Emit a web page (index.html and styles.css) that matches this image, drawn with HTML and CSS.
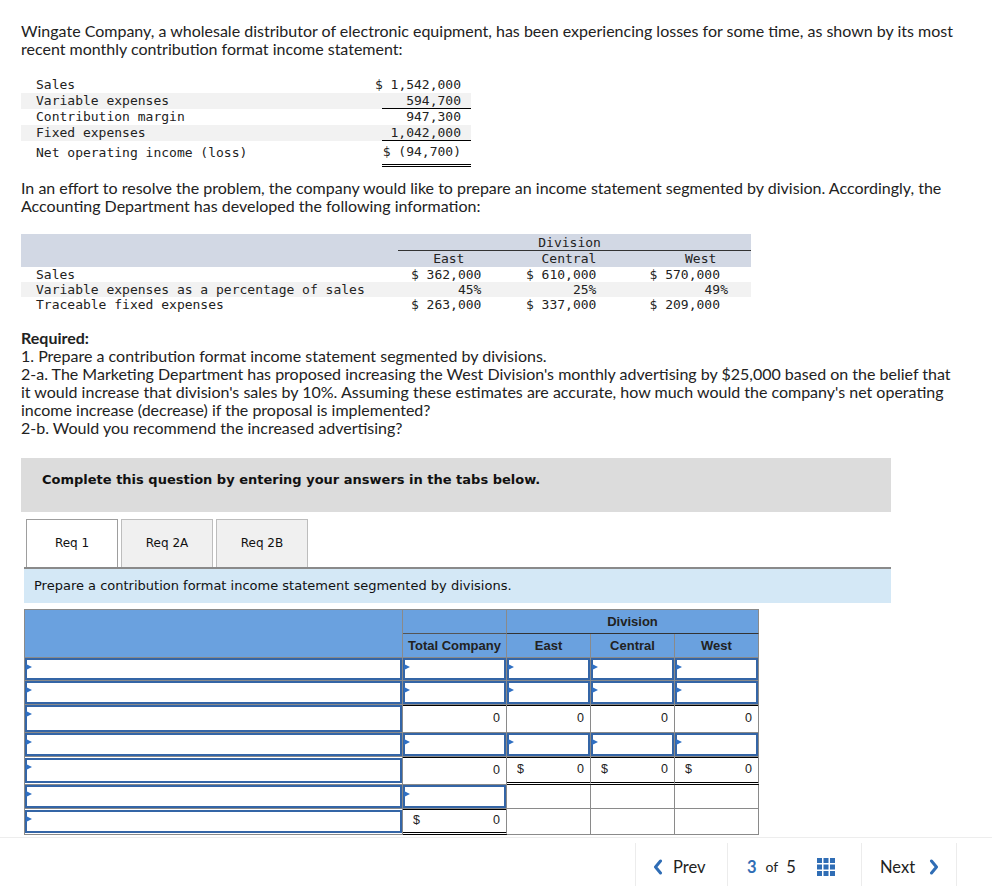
FILE: index.html
```html
<!DOCTYPE html>
<html lang="en">
<head>
<meta charset="utf-8">
<title>Wingate Company</title>
<link rel="stylesheet" href="styles.css">
</head>
<body>
<div class="page">
  <p class="txt intro">Wingate Company, a wholesale distributor of electronic equipment, has been experiencing losses for some time, as shown by its most recent monthly contribution format income statement:</p>

  <table class="stmt">
    <tr><td class="lbl">Sales</td><td class="num"><div class="v">$ 1,542,000</div></td></tr>
    <tr class="alt"><td class="lbl">Variable expenses</td><td class="num ul"><div class="v">594,700</div></td></tr>
    <tr><td class="lbl">Contribution margin</td><td class="num"><div class="v">947,300</div></td></tr>
    <tr class="alt"><td class="lbl">Fixed expenses</td><td class="num ul"><div class="v">1,042,000</div></td></tr>
    <tr class="net"><td class="lbl">Net operating income (loss)</td><td class="num dbl"><div class="v">$ (94,700)</div></td></tr>
  </table>

  <p class="txt para2">In an effort to resolve the problem, the company would like to prepare an income statement segmented by division. Accordingly, the Accounting Department has developed the following information:</p>

  <table class="divt">
    <tr class="hd">
      <td class="lbl" rowspan="2"></td>
      <td class="divhead" colspan="3">Division</td>
    </tr>
    <tr class="hd hd2">
      <td class="c-e">East</td><td class="c-c">Central</td><td class="c-w">West</td>
    </tr>
    <tr><td class="lbl">Sales</td><td class="v-e">$ 362,000</td><td class="v-c">$ 610,000</td><td class="v-w">$ 570,000</td></tr>
    <tr class="alt"><td class="lbl">Variable expenses as a percentage of sales</td><td class="v-e">45%</td><td class="v-c">25%</td><td class="p-w">49%</td></tr>
    <tr><td class="lbl">Traceable fixed expenses</td><td class="v-e">$ 263,000</td><td class="v-c">$ 337,000</td><td class="v-w">$ 209,000</td></tr>
  </table>

  <div class="txt req">
    <div class="req-title">Required:</div>
    <div>1. Prepare a contribution format income statement segmented by divisions.</div>
    <div>2-a. The Marketing Department has proposed increasing the West Division's monthly advertising by $25,000 based on the belief that it would increase that division's sales by 10%. Assuming these estimates are accurate, how much would the company's net operating income increase (decrease) if the proposal is implemented?</div>
    <div>2-b. Would you recommend the increased advertising?</div>
  </div>

  <div class="banner">Complete this question by entering your answers in the tabs below.</div>

  <div class="tabs">
    <div class="tab active">Req 1</div>
    <div class="tab">Req 2A</div>
    <div class="tab">Req 2B</div>
  </div>
  <div class="instr">Prepare a contribution format income statement segmented by divisions.</div>

  <table class="ans">
    <tr class="h1">
      <td class="c-lbl" rowspan="2"></td>
      <td class="c-tot"></td>
      <td class="c-div" colspan="3">Division</td>
    </tr>
    <tr class="h2">
      <td class="c-tot">Total Company</td>
      <td>East</td><td>Central</td><td>West</td>
    </tr>
    <tr class="r23">
      <td><div class="inp"></div></td>
      <td><div class="inp"></div></td>
      <td><div class="inp"></div></td>
      <td><div class="inp"></div></td>
      <td><div class="inp"></div></td>
    </tr>
    <tr class="r24">
      <td><div class="inp"></div></td>
      <td><div class="inp"></div></td>
      <td><div class="inp"></div></td>
      <td><div class="inp"></div></td>
      <td><div class="inp"></div></td>
    </tr>
    <tr class="r28">
      <td><div class="inp tall"></div></td>
      <td class="n sum">0</td>
      <td class="n sum">0</td>
      <td class="n sum">0</td>
      <td class="n sum">0</td>
    </tr>
    <tr class="r24">
      <td><div class="inp"></div></td>
      <td><div class="inp"></div></td>
      <td><div class="inp"></div></td>
      <td><div class="inp"></div></td>
      <td><div class="inp"></div></td>
    </tr>
    <tr class="r26">
      <td><div class="inp"></div></td>
      <td class="n sum">0</td>
      <td class="n sum dbl"><span class="cur">$</span>0</td>
      <td class="n sum dbl"><span class="cur">$</span>0</td>
      <td class="n sum dbl"><span class="cur">$</span>0</td>
    </tr>
    <tr class="r24">
      <td><div class="inp"></div></td>
      <td><div class="inp"></div></td>
      <td></td><td></td><td></td>
    </tr>
    <tr class="r24">
      <td><div class="inp"></div></td>
      <td class="n sum dbl"><span class="cur">$</span>0</td>
      <td></td><td></td><td></td>
    </tr>
  </table>
</div>

<div class="footer">
  <nav class="pager">
    <div class="pg prev">
      <svg class="chev" width="10" height="16" viewBox="0 0 10 16"><polyline points="7.5,2 2.5,8 7.5,14" fill="none" stroke="#2f6db5" stroke-width="3" stroke-linecap="round" stroke-linejoin="round"/></svg>
      <span>Prev</span>
    </div>
    <div class="pg count">
      <span class="cur-p">3</span><span class="of">of</span><span>5</span>
      <svg class="grid" width="18" height="18" viewBox="0 0 18 18" fill="#2f6db5">
        <rect x="0" y="0" width="5" height="5"/><rect x="6.5" y="0" width="5" height="5"/><rect x="13" y="0" width="5" height="5"/>
        <rect x="0" y="6.5" width="5" height="5"/><rect x="6.5" y="6.5" width="5" height="5"/><rect x="13" y="6.5" width="5" height="5"/>
        <rect x="0" y="13" width="5" height="5"/><rect x="6.5" y="13" width="5" height="5"/><rect x="13" y="13" width="5" height="5"/>
      </svg>
    </div>
    <div class="pg next">
      <span>Next</span>
      <svg class="chev" width="10" height="16" viewBox="0 0 10 16"><polyline points="2.5,2 7.5,8 2.5,14" fill="none" stroke="#2f6db5" stroke-width="3" stroke-linecap="round" stroke-linejoin="round"/></svg>
    </div>
  </nav>
</div>
</body>
</html>
```

FILE: styles.css
```css
html, body {
  margin: 0;
  padding: 0;
  background: #fff;
  color: #222;
}

.page {
  padding: 0 0 0 21px;
  width: 940px;
}

.txt {
  font-family: Lato, "Liberation Sans", sans-serif;
  font-size: 16px;
  line-height: 18px;
  color: #222;
}

.intro {
  margin: 22px 0 0;
}

.para2 {
  margin: 12px 0 0;
}

/* statement table */
.stmt, .divt {
  border-collapse: collapse;
  font-family: "DejaVu Sans Mono", monospace;
  font-size: 13px;
  color: #222;
}

.stmt {
  margin-top: 19px;
  width: 450px;
}

.stmt td {
  padding: 0;
  height: 15.6px;
  line-height: 15.6px;
  white-space: nowrap;
}

.stmt .lbl {
  padding-left: 15px;
}

.stmt .num {
  width: 79px;
  padding-right: 10px;
}

.stmt .v {
  width: 79px;
  display: flex;
  justify-content: flex-end;
}

.stmt .alt td {
  background: #f2f2f2;
}

.stmt .ul {
  border-bottom: 1px solid #000;
}

.stmt .net td {
  padding-top: 3px;
  padding-bottom: 4px;
}

.stmt .dbl {
  border-bottom: 3px double #000;
}

/* division table */
.divt {
  margin-top: 19px;
  width: 730px;
}

.divt td {
  padding: 0;
  line-height: 15px;
  height: 15px;
  white-space: nowrap;
}

.divt .lbl {
  width: 367px;
  padding-left: 15px;
}

.divt .hd td {
  background: #d2d8e4;
}

.divt .divhead {
  text-align: center;
  padding-top: 1px;
  border-bottom: 1px solid #333;
  padding-right: 10px;
}

.divt .hd2 td {
  text-align: center;
  padding-bottom: 1px;
}

.divt .c-e { width: 87px; padding-left: 8px !important; }
.divt .c-c { width: 160px; }
.divt .c-w { width: 101px; padding-left: 4px !important; }

.divt .v-e, .divt .v-c, .divt .v-w, .divt .p-w {
  text-align: right;
}

.divt .v-e { padding-right: 10px; }
.divt .v-c { padding-right: 50px; }
.divt .v-w { padding-right: 31px; }
.divt .p-w { padding-right: 23px; }

.divt .alt td {
  background: #f2f2f2;
}

/* required */
.req {
  margin-top: 17px;
}

.req-title {
  font-weight: 700;
}

/* banner */
.banner {
  margin-top: 21px;
  width: 870px;
  height: 54px;
  box-sizing: border-box;
  background: #dcdcdc;
  padding: 14px 0 0 21px;
  font-family: "DejaVu Sans", Verdana, sans-serif;
  font-weight: 700;
  font-size: 13px;
  color: #111;
}

/* tabs */
.tabs {
  display: flex;
  gap: 3px;
  margin: 7px 0 0 5px;
  height: 48px;
}

.tab {
  width: 92px;
  box-sizing: border-box;
  border: 1px solid #bdbdbd;
  border-bottom: none;
  background: #f0f0f0;
  display: flex;
  align-items: center;
  justify-content: center;
  font-family: "DejaVu Sans", Verdana, sans-serif;
  font-size: 12px;
  color: #111;
}

.tab.active {
  background: #fff;
  border-color: #9e9e9e;
}

.instr {
  margin-left: 3px;
  width: 867px;
  box-sizing: border-box;
  border-top: 2px solid #8a8a8a;
  background: #d4e8f6;
  height: 36px;
  padding: 9px 0 0 10px;
  font-family: "DejaVu Sans", Verdana, sans-serif;
  font-size: 13px;
  color: #111;
}

/* answer table */
.ans {
  margin: 6px 0 0 3px;
  border-collapse: separate;
  border-spacing: 0;
  border-top: 1px solid #8a8a8a;
  border-left: 1px solid #8a8a8a;
  font-family: "Liberation Sans", Arial, sans-serif;
  font-size: 12px;
  color: #222;
}

.ans td {
  padding: 0;
  border-right: 1px solid #8a8a8a;
  border-bottom: 1px solid #8a8a8a;
  vertical-align: middle;
}

.ans td:nth-child(1) { width: 377px; }

.ans .h1 td, .ans .h2 td {
  background: #6aa1df;
  height: 23px;
  font-weight: 700;
  font-size: 13px;
  text-align: center;
  color: #222;
}

.ans .h1 .c-lbl { width: 377px; }
.ans .h1 .c-div { border-bottom-color: #333; }
.ans .h1 .c-tot { border-bottom-color: #555; width: 103px; }
.ans .h2 td { width: 83px; }
.ans .h2 td.c-tot { width: 103px; }

.ans .r23 td { height: 22px; }
.ans .r24 td { height: 23px; }
.ans .r28 td { height: 27px; }
.ans .r26 td { height: 25px; }

.inp {
  position: relative;
  box-sizing: border-box;
  height: 23px;
  border: 2px solid #3465a6;
  background: #fff;
}

.r23 .inp { height: 22px; }
.inp.tall { height: 27px; }
.r26 .inp { height: 25px; }

.inp::before {
  content: "";
  position: absolute;
  left: -1px;
  top: 4px;
  border-left: 6px solid #2f6fc2;
  border-top: 3.5px solid transparent;
  border-bottom: 3.5px solid transparent;
}

.ans .n {
  text-align: right;
  padding-right: 6px;
  font-size: 12.5px;
}

.ans .sum {
  box-shadow: inset 0 1px 0 #000;
}

.ans .dbl {
  border-bottom: 3px double #000;
}

.ans .cur {
  float: left;
  padding-left: 10px;
}

/* footer */
.footer {
  margin-top: 2px;
  border-top: 1px solid #ededed;
  padding-top: 5px;
}

.pager {
  display: flex;
  justify-content: flex-end;
  padding-right: 35px;
  font-family: Lato, "Liberation Sans", sans-serif;
  font-size: 16.5px;
  color: #222;
}

.pg {
  height: 43px;
  padding-top: 5px;
  display: flex;
  align-items: center;
  border-left: 1px solid #ececec;
  box-sizing: border-box;
}

.pg.prev {
  width: 92px;
  padding-left: 17px;
  gap: 10px;
}

.pg.count {
  width: 134px;
  padding-left: 19px;
}

.pg.count .cur-p {
  color: #2f6db5;
  font-weight: 700;
}

.pg.count .of {
  font-size: 14px;
  margin: 0 8px 0 9px;
}

.pg.count .grid {
  margin-left: 21px;
}

.pg.next {
  width: 96px;
  padding-left: 18px;
  gap: 14px;
  border-right: 1px solid #ececec;
}
```
